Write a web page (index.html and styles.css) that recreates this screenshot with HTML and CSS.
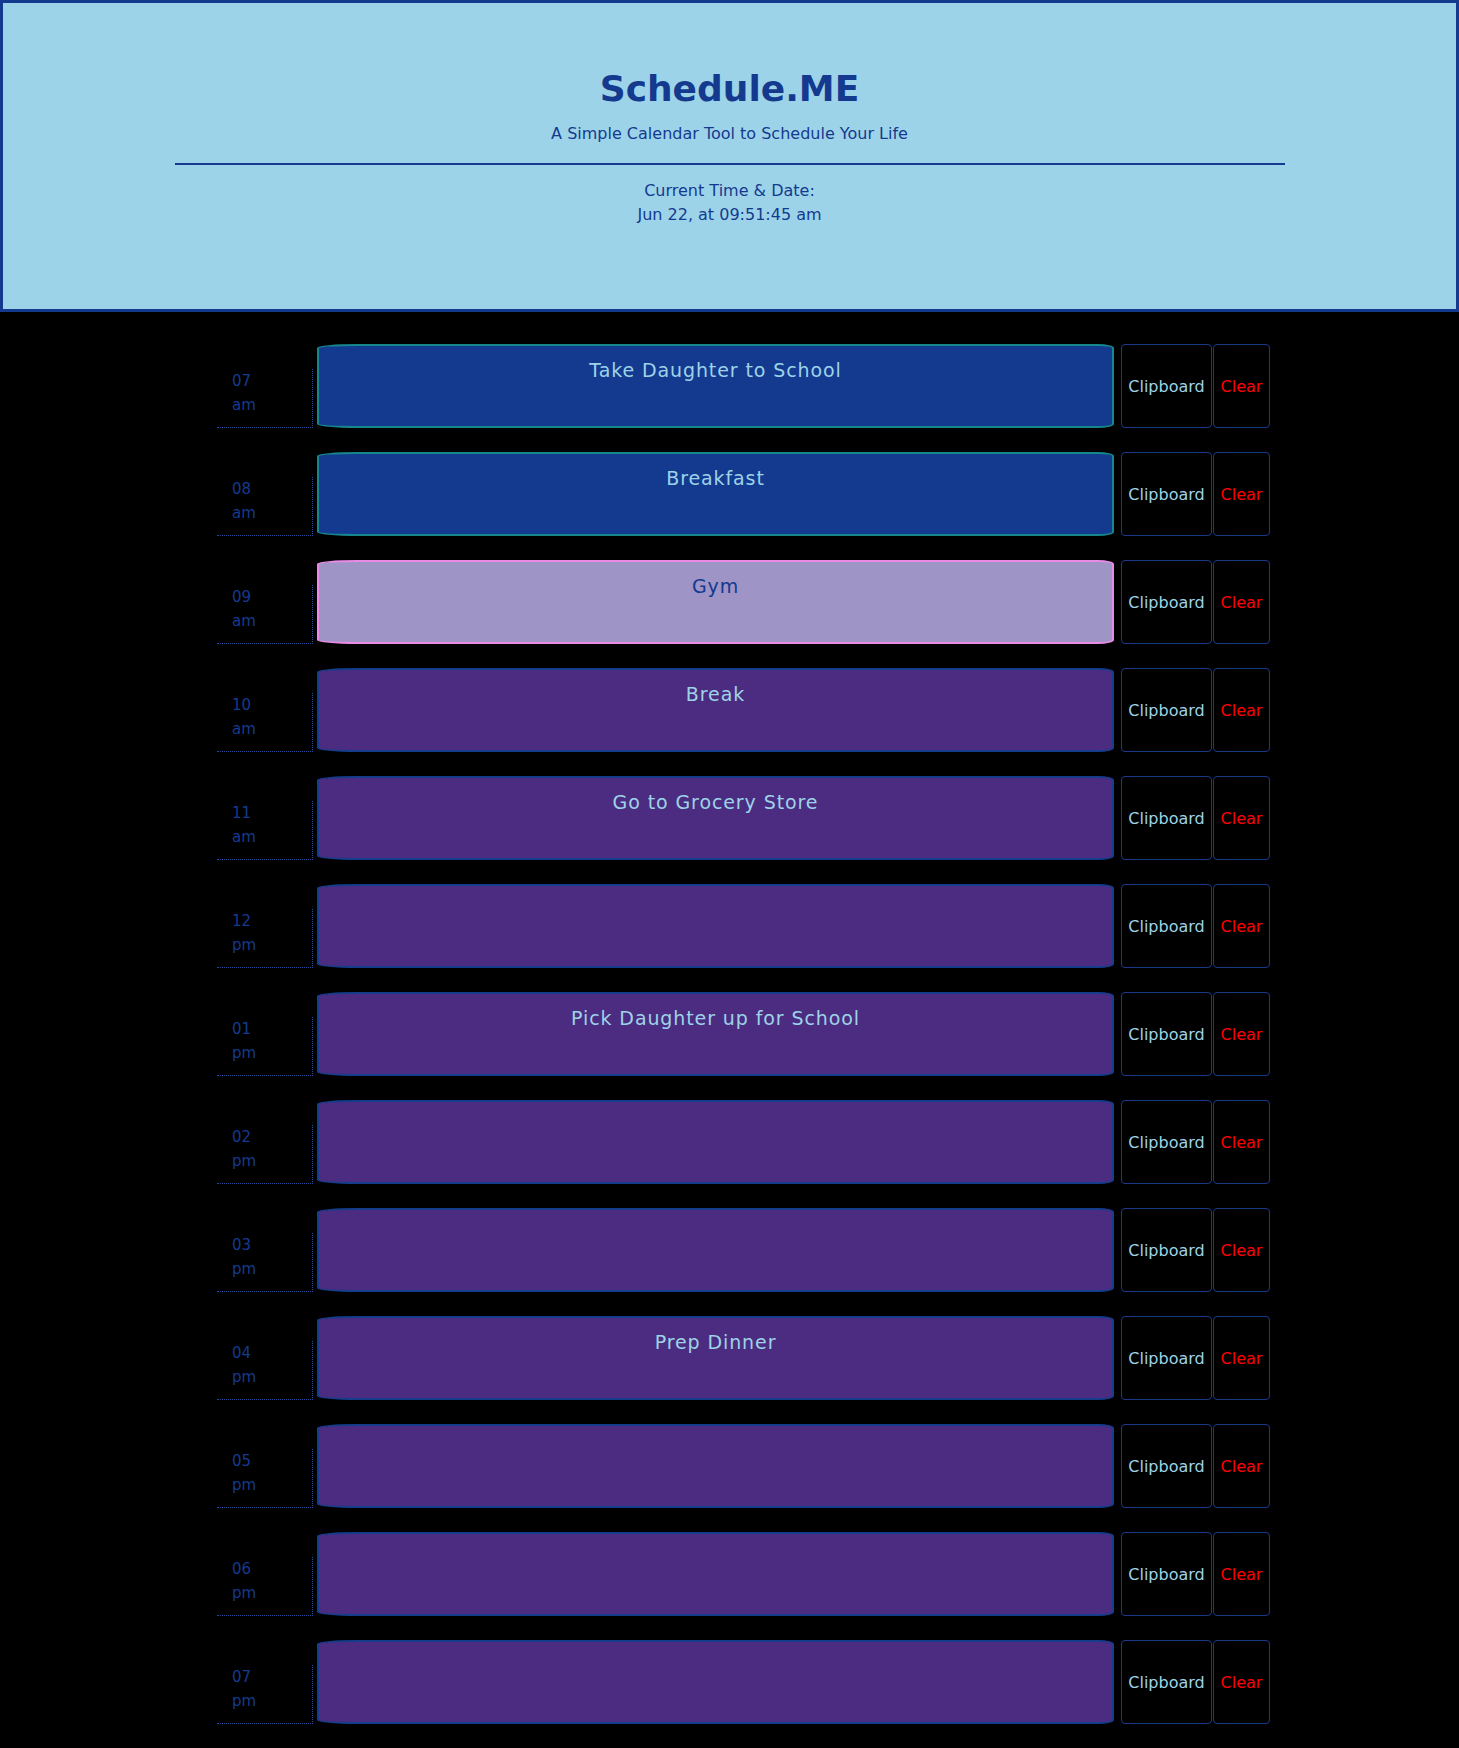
FILE: index.html
```html
<!DOCTYPE html>
<html lang="en">
<head>
<meta charset="utf-8">
<title>Schedule.ME</title>
<link rel="stylesheet" href="styles.css">
</head>
<body>
<header class="jumbotron">
  <h1 class="title">Schedule.ME</h1>
  <p class="lead">A Simple Calendar Tool to Schedule Your Life</p>
  <hr class="divider">
  <p class="current">Current Time &amp; Date:<br>Jun 22, at 09:51:45 am</p>
</header>
<main class="container">
  <div class="row"><div class="hour">07<br>am</div><textarea class="task past">Take Daughter to School</textarea><button class="btn copy">Clipboard</button><button class="btn clear">Clear</button></div>
  <div class="row"><div class="hour">08<br>am</div><textarea class="task past">Breakfast</textarea><button class="btn copy">Clipboard</button><button class="btn clear">Clear</button></div>
  <div class="row"><div class="hour">09<br>am</div><textarea class="task present">Gym</textarea><button class="btn copy">Clipboard</button><button class="btn clear">Clear</button></div>
  <div class="row"><div class="hour">10<br>am</div><textarea class="task future">Break</textarea><button class="btn copy">Clipboard</button><button class="btn clear">Clear</button></div>
  <div class="row"><div class="hour">11<br>am</div><textarea class="task future">Go to Grocery Store</textarea><button class="btn copy">Clipboard</button><button class="btn clear">Clear</button></div>
  <div class="row"><div class="hour">12<br>pm</div><textarea class="task future"></textarea><button class="btn copy">Clipboard</button><button class="btn clear">Clear</button></div>
  <div class="row"><div class="hour">01<br>pm</div><textarea class="task future">Pick Daughter up for School</textarea><button class="btn copy">Clipboard</button><button class="btn clear">Clear</button></div>
  <div class="row"><div class="hour">02<br>pm</div><textarea class="task future"></textarea><button class="btn copy">Clipboard</button><button class="btn clear">Clear</button></div>
  <div class="row"><div class="hour">03<br>pm</div><textarea class="task future"></textarea><button class="btn copy">Clipboard</button><button class="btn clear">Clear</button></div>
  <div class="row"><div class="hour">04<br>pm</div><textarea class="task future">Prep Dinner</textarea><button class="btn copy">Clipboard</button><button class="btn clear">Clear</button></div>
  <div class="row"><div class="hour">05<br>pm</div><textarea class="task future"></textarea><button class="btn copy">Clipboard</button><button class="btn clear">Clear</button></div>
  <div class="row"><div class="hour">06<br>pm</div><textarea class="task future"></textarea><button class="btn copy">Clipboard</button><button class="btn clear">Clear</button></div>
  <div class="row"><div class="hour">07<br>pm</div><textarea class="task future"></textarea><button class="btn copy">Clipboard</button><button class="btn clear">Clear</button></div>
</main>
</body>
</html>
```
FILE: styles.css
```css
* { box-sizing: border-box; }
html, body { margin: 0; padding: 0; }
body {
  background: #000000;
  font-family: "DejaVu Sans", "Liberation Sans", sans-serif;
  color: #143a8f;
  height: 1748px;
}
.jumbotron {
  height: 312px;
  background: #9dd3e8;
  border: 3px solid #143a8f;
  text-align: center;
  padding-top: 64px;
}
.title {
  margin: 0;
  font-size: 36px;
  line-height: 44px;
  font-weight: bold;
  color: #143a8f;
}
.lead {
  margin: 13px 0 0;
  font-size: 16px;
  line-height: 20px;
}
.divider {
  width: 1110px;
  margin: 19px auto 0;
  border: 0;
  border-top: 2px solid #143a8f;
  height: 0;
}
.current {
  margin: 14px 0 0;
  font-size: 16px;
  line-height: 24px;
}
.container {
  width: 1053px;
  margin: 32px 0 0 217px;
  display: flex;
  flex-direction: column;
  gap: 24px;
}
.row {
  display: flex;
  height: 84px;
  align-items: stretch;
}
.hour {
  width: 96px;
  height: 59px;
  align-self: flex-end;
  padding: 0 0 0 15px;
  border-right: 1px dotted #2a4a9a;
  border-bottom: 1px dotted #2a4a9a;
  font-size: 15px;
  line-height: 24px;
  color: #143a8f;
}
.task {
  width: 797px;
  margin-left: 4px;
  margin-right: 7px;
  resize: none;
  text-align: center;
  font-family: inherit;
  font-size: 19px;
  letter-spacing: 0.9px;
  line-height: 24px;
  padding: 12px 10px 6px;
  border: 2px solid;
  border-radius: 40px 16px 16px 40px / 4px 4px 4px 4px;
  overflow: hidden;
  outline: none;
}
.past { background: #143a8f; border-color: #15878c; color: #9dd3e8; }
.present { background: #9e94c6; border-color: #e98ae6; color: #143a8f; }
.future { background: #4b2c80; border-color: #163c8c; color: #9dd3e8; }
.btn {
  background: #000000;
  border: 1px solid #1a3a86;
  border-radius: 4px;
  font-family: inherit;
  font-size: 16px;
  padding: 0;
  margin: 0;
}
.copy { width: 91px; color: #9dd3e8; margin-right: 1px; }
.clear { width: 57px; color: #ff0000; }
```
